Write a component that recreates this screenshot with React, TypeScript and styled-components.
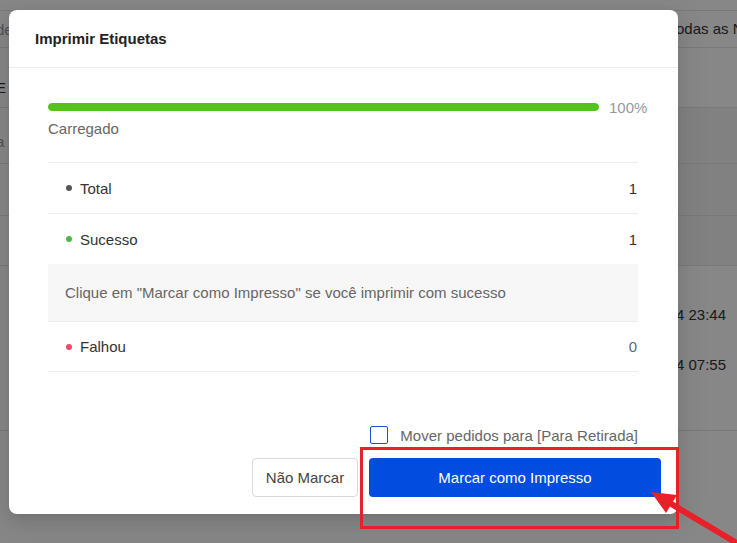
import React from 'react';
import styled, { createGlobalStyle } from 'styled-components';

const GlobalStyle = createGlobalStyle`
    html, body {
        margin: 0;
        padding: 0;
        height: 100%;
    }
    body {
        font-family: "Liberation Sans", Arial, sans-serif;
        background: #fff;
        overflow: hidden;
    }
    #root {
        height: 100%;
    }
`;

const Page = styled.div`
    position: relative;
    width: 737px;
    height: 543px;
    overflow: hidden;
    background: #fff;
`;

// background page (behind the dimmed overlay)
const BgTable = styled.div`
    display: flex;
    flex-direction: column;
`;

const BgRow = styled.div<{ $h: number }>`
    box-sizing: border-box;
    height: ${p => p.$h}px;
    border-bottom: 1px solid #e4e4e4;
    display: flex;
    justify-content: space-between;
    align-items: center;
    font-size: 15px;
    color: #333;
`;

const BgLeft = styled.span<{ $muted?: boolean; $shift?: number }>`
    margin-left: -4px;
    margin-top: ${p => p.$shift || 0}px;
    color: ${p => (p.$muted ? '#999' : '#333')};
`;

const BgRight = styled.div<{ $shade?: boolean; $top?: boolean }>`
    box-sizing: border-box;
    width: 61px;
    height: 100%;
    padding-top: ${p => (p.$top ? '40px' : '0')};
    display: flex;
    flex-direction: column;
    justify-content: ${p => (p.$top ? 'flex-start' : 'center')};
    gap: 32px;
    line-height: 18px;
    white-space: nowrap;
    overflow: hidden;
    background: ${p => (p.$shade ? '#f3f3f3' : 'transparent')};
`;

const Overlay = styled.div`
    position: absolute;
    inset: 0;
    background: rgba(0, 0, 0, 0.47);
    display: flex;
    align-items: flex-start;
    padding: 10px 0 0 9px;
`;

const Modal = styled.div`
    width: 669px;
    height: 504px;
    background: #fff;
    border-radius: 8px;
    box-shadow: 0 6px 16px rgba(0, 0, 0, 0.08), 0 3px 6px -4px rgba(0, 0, 0, 0.12), 0 9px 28px 8px rgba(0, 0, 0, 0.05);
    display: flex;
    flex-direction: column;
`;

const Header = styled.div`
    box-sizing: border-box;
    height: 58px;
    padding: 0 26px;
    border-bottom: 1px solid #ededed;
    display: flex;
    align-items: center;
    font-size: 15px;
    font-weight: 700;
    color: #222;
`;

const Body = styled.div`
    flex: 1;
    padding: 28px 40px 0 39px;
    display: flex;
    flex-direction: column;
`;

const ProgressRow = styled.div`
    height: 22px;
    display: flex;
    align-items: center;
    margin-right: -9px;
`;

const Track = styled.div`
    flex: 1;
    height: 8px;
    border-radius: 100px;
    background: #f5f5f5;
    overflow: hidden;
`;

const Fill = styled.div`
    height: 100%;
    border-radius: 100px;
    background: #52c41a;
`;

const Percent = styled.span`
    width: 38px;
    margin-left: 10px;
    font-size: 15px;
    color: #999;
    white-space: nowrap;
`;

const Status = styled.div`
    font-size: 15px;
    line-height: 22px;
    color: #666;
`;

const List = styled.div`
    margin-top: 22px;
    display: flex;
    flex-direction: column;
`;

const Row = styled.div<{ $last?: boolean }>`
    box-sizing: border-box;
    height: 51px;
    padding: 0 1px 0 18px;
    border-top: 1px solid #eeeeee;
    border-bottom: ${p => (p.$last ? '1px solid #eeeeee' : 'none')};
    display: flex;
    align-items: center;
    font-size: 15px;
    color: #333;
`;

const Dot = styled.span<{ $color: string }>`
    width: 6px;
    height: 6px;
    border-radius: 50%;
    background: ${p => p.$color};
    margin-right: 8px;
`;

const Label = styled.span`
    flex: 1;
`;

const Value = styled.span<{ $muted?: boolean }>`
    color: ${p => (p.$muted ? '#666' : '#333')};
`;

const Info = styled.div`
    box-sizing: border-box;
    height: 57px;
    padding: 0 17px;
    background: #f7f7f7;
    display: flex;
    align-items: center;
    font-size: 15px;
    color: #666;
`;

const CheckRow = styled.label`
    margin-top: 54px;
    height: 18px;
    display: flex;
    align-items: center;
    justify-content: flex-end;
    gap: 12px;
    font-size: 15px;
    color: #666;
`;

const Box = styled.span`
    box-sizing: border-box;
    width: 18px;
    height: 18px;
    border: 1.5px solid #1d52d8;
    border-radius: 2px;
    background: #fff;
`;

const Footer = styled.div`
    padding: 0 17px 17px;
    display: flex;
    justify-content: flex-end;
    gap: 11px;
`;

const Button = styled.button<{ $primary?: boolean }>`
    box-sizing: border-box;
    height: 39px;
    width: ${p => (p.$primary ? '292px' : '106px')};
    border-radius: 4px;
    border: ${p => (p.$primary ? 'none' : '1px solid #d9d9d9')};
    background: ${p => (p.$primary ? '#024ce0' : '#fff')};
    color: ${p => (p.$primary ? '#fff' : '#444')};
    font-family: "Liberation Sans", Arial, sans-serif;
    font-size: 15px;
    cursor: pointer;
`;

const Annotation = styled.svg`
    position: absolute;
    inset: 0;
    pointer-events: none;
`;

function App() {
    const stats = [
        { label: 'Total', value: 1, color: '#555' },
        { label: 'Sucesso', value: 1, color: '#4cb944' },
    ];

    return (
        <Page>
            <GlobalStyle />
            <BgTable>
                <BgRow $h={11} />
                <BgRow $h={37}>
                    <BgLeft $muted>de</BgLeft>
                    <BgRight>odas as N</BgRight>
                </BgRow>
                <BgRow $h={60}>
                    <BgLeft $shift={20}>E</BgLeft>
                    <BgRight />
                </BgRow>
                <BgRow $h={56}>
                    <BgLeft $muted $shift={12}>a</BgLeft>
                    <BgRight $shade />
                </BgRow>
                <BgRow $h={52}>
                    <span />
                    <BgRight $shade />
                </BgRow>
                <BgRow $h={50}>
                    <span />
                    <BgRight $shade />
                </BgRow>
                <BgRow $h={165}>
                    <span />
                    <BgRight $top>
                        <span>4 23:44</span>
                        <span>4 07:55</span>
                    </BgRight>
                </BgRow>
            </BgTable>

            <Overlay>
                <Modal>
                    <Header>Imprimir Etiquetas</Header>
                    <Body>
                        <ProgressRow>
                            <Track>
                                <Fill style={{ width: '100%' }} />
                            </Track>
                            <Percent>100%</Percent>
                        </ProgressRow>
                        <Status>Carregado</Status>

                        <List>
                            {stats.map(s => (
                                <Row key={s.label}>
                                    <Dot $color={s.color} />
                                    <Label>{s.label}</Label>
                                    <Value>{s.value}</Value>
                                </Row>
                            ))}
                            <Info>Clique em "Marcar como Impresso" se você imprimir com sucesso</Info>
                            <Row $last>
                                <Dot $color="#f24a63" />
                                <Label>Falhou</Label>
                                <Value $muted>0</Value>
                            </Row>
                        </List>

                        <CheckRow>
                            <Box />
                            Mover pedidos para [Para Retirada]
                        </CheckRow>
                    </Body>
                    <Footer>
                        <Button>Não Marcar</Button>
                        <Button $primary>Marcar como Impresso</Button>
                    </Footer>
                </Modal>
            </Overlay>

            <Annotation width="737" height="543" viewBox="0 0 737 543">
                <rect x="361.5" y="448.5" width="316" height="79" fill="none" stroke="#e8202a" strokeWidth="3" />
                <line x1="745" y1="548" x2="668" y2="502" stroke="#e8202a" strokeWidth="6" />
                <polygon points="651,492 666,513 677,495" fill="#e8202a" />
            </Annotation>
        </Page>
    );
}

export default App;
